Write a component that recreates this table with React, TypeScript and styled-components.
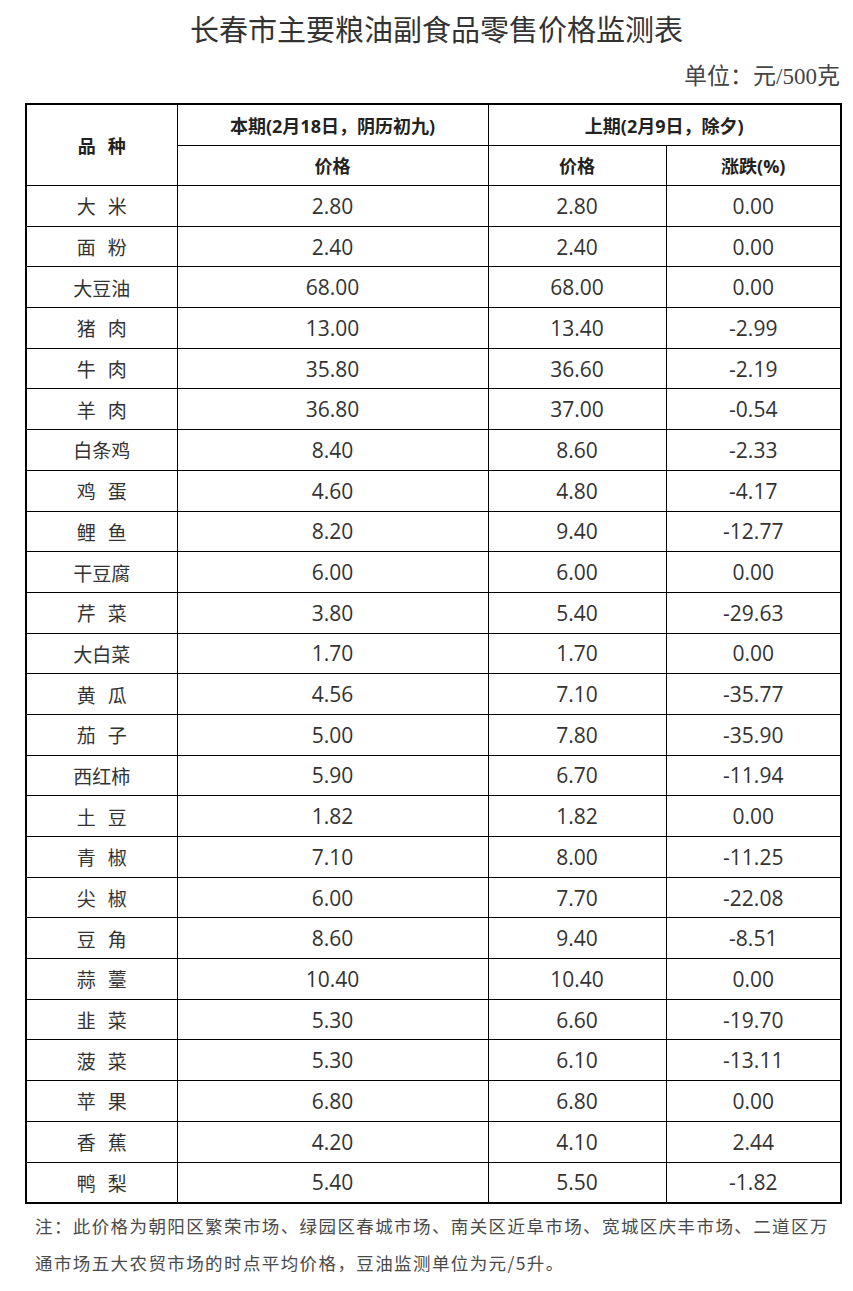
import React from "react";
import styled, { createGlobalStyle } from "styled-components";

const GlobalStyle = createGlobalStyle`
  html, body {
    margin: 0;
    padding: 0;
    background: #ffffff;
  }
`;

type RowType = {
  name: string;
  current: string;
  previous: string;
  change: string;
};

const ROWS: RowType[] = [
  { name: "大 米", current: "2.80", previous: "2.80", change: "0.00" },
  { name: "面 粉", current: "2.40", previous: "2.40", change: "0.00" },
  { name: "大豆油", current: "68.00", previous: "68.00", change: "0.00" },
  { name: "猪 肉", current: "13.00", previous: "13.40", change: "-2.99" },
  { name: "牛 肉", current: "35.80", previous: "36.60", change: "-2.19" },
  { name: "羊 肉", current: "36.80", previous: "37.00", change: "-0.54" },
  { name: "白条鸡", current: "8.40", previous: "8.60", change: "-2.33" },
  { name: "鸡 蛋", current: "4.60", previous: "4.80", change: "-4.17" },
  { name: "鲤 鱼", current: "8.20", previous: "9.40", change: "-12.77" },
  { name: "干豆腐", current: "6.00", previous: "6.00", change: "0.00" },
  { name: "芹 菜", current: "3.80", previous: "5.40", change: "-29.63" },
  { name: "大白菜", current: "1.70", previous: "1.70", change: "0.00" },
  { name: "黄 瓜", current: "4.56", previous: "7.10", change: "-35.77" },
  { name: "茄 子", current: "5.00", previous: "7.80", change: "-35.90" },
  { name: "西红柿", current: "5.90", previous: "6.70", change: "-11.94" },
  { name: "土 豆", current: "1.82", previous: "1.82", change: "0.00" },
  { name: "青 椒", current: "7.10", previous: "8.00", change: "-11.25" },
  { name: "尖 椒", current: "6.00", previous: "7.70", change: "-22.08" },
  { name: "豆 角", current: "8.60", previous: "9.40", change: "-8.51" },
  { name: "蒜 薹", current: "10.40", previous: "10.40", change: "0.00" },
  { name: "韭 菜", current: "5.30", previous: "6.60", change: "-19.70" },
  { name: "菠 菜", current: "5.30", previous: "6.10", change: "-13.11" },
  { name: "苹 果", current: "6.80", previous: "6.80", change: "0.00" },
  { name: "香 蕉", current: "4.20", previous: "4.10", change: "2.44" },
  { name: "鸭 梨", current: "5.40", previous: "5.50", change: "-1.82" },
];

const Page = styled.div`
  width: 815px;
  margin-left: 25px;
  padding-top: 12px;
  padding-bottom: 20px;
`;

const Title = styled.h1`
  margin: 0;
  text-align: center;
  font-family: "Liberation Serif", "Noto Sans CJK SC", serif;
  font-weight: 400;
  font-size: 29px;
  line-height: 38px;
  color: #333;
  padding-left: 8px;
`;

const Unit = styled.div`
  text-align: right;
  font-family: "Liberation Serif", "Noto Sans CJK SC", serif;
  font-size: 23px;
  line-height: 30px;
  color: #444;
  margin-top: 12px;
  margin-bottom: 11px;
`;

const PriceTable = styled.table`
  width: 815px;
  border-collapse: collapse;
  table-layout: fixed;
  border: 2px solid #000;
`;

const HeadCell = styled.th`
  border: 1.5px solid #000;
  height: 39.5px;
  padding: 0;
  text-align: center;
  vertical-align: middle;
  font-family: "Open Sans", "Noto Sans CJK SC", sans-serif;
  font-weight: 700;
  font-size: 18px;
  color: #222;
  white-space: nowrap;
`;

const BodyCell = styled.td<{ kind?: "name" | "num" }>`
  border: 1.5px solid #000;
  height: 39.7px;
  padding: 0;
  text-align: center;
  vertical-align: middle;
  font-family: ${({ kind }) =>
    kind === "name"
      ? `"Noto Sans CJK SC", sans-serif`
      : `"Open Sans", "Noto Sans CJK SC", sans-serif`};
  font-size: ${({ kind }) => (kind === "name" ? "19px" : "21px")};
  color: #333;
  white-space: nowrap;
`;

const Gap = styled.span<{ size: number }>`
  display: inline-block;
  width: ${({ size }) => size}px;
`;

const Note = styled.p`
  margin: 3px 0 0 10px;
  font-family: "Noto Sans CJK SC", sans-serif;
  font-size: 17.5px;
  letter-spacing: 1.4px;
  line-height: 37px;
  color: #4a4a4a;
`;

const Spaced = ({ text, gap }: { text: string; gap: number }) => {
  const parts = text.split(" ");
  return (
    <>
      {parts.map((part, i) => (
        <React.Fragment key={i}>
          {i > 0 && <Gap size={gap} />}
          {part}
        </React.Fragment>
      ))}
    </>
  );
};

export default function App() {
  return (
    <>
      <GlobalStyle />
      <Page>
        <Title>长春市主要粮油副食品零售价格监测表</Title>
        <Unit>单位：元/500克</Unit>
        <PriceTable>
          <colgroup>
            <col style={{ width: 151 }} />
            <col style={{ width: 311 }} />
            <col style={{ width: 178 }} />
            <col style={{ width: 175 }} />
          </colgroup>
          <thead>
            <tr>
              <HeadCell rowSpan={2}>
                <Spaced text="品 种" gap={12} />
              </HeadCell>
              <HeadCell>本期(2月18日，阴历初九)</HeadCell>
              <HeadCell colSpan={2}>上期(2月9日，除夕)</HeadCell>
            </tr>
            <tr>
              <HeadCell>价格</HeadCell>
              <HeadCell>价格</HeadCell>
              <HeadCell>涨跌(%)</HeadCell>
            </tr>
          </thead>
          <tbody>
            {ROWS.map((row) => (
              <tr key={row.name}>
                <BodyCell kind="name">
                  <Spaced text={row.name} gap={12} />
                </BodyCell>
                <BodyCell kind="num">{row.current}</BodyCell>
                <BodyCell kind="num">{row.previous}</BodyCell>
                <BodyCell kind="num">{row.change}</BodyCell>
              </tr>
            ))}
          </tbody>
        </PriceTable>
        <Note>
          注：此价格为朝阳区繁荣市场、绿园区春城市场、南关区近阜市场、宽城区庆丰市场、二道区万通市场五大农贸市场的时点平均价格，豆油监测单位为元/5升。
        </Note>
      </Page>
    </>
  );
}
